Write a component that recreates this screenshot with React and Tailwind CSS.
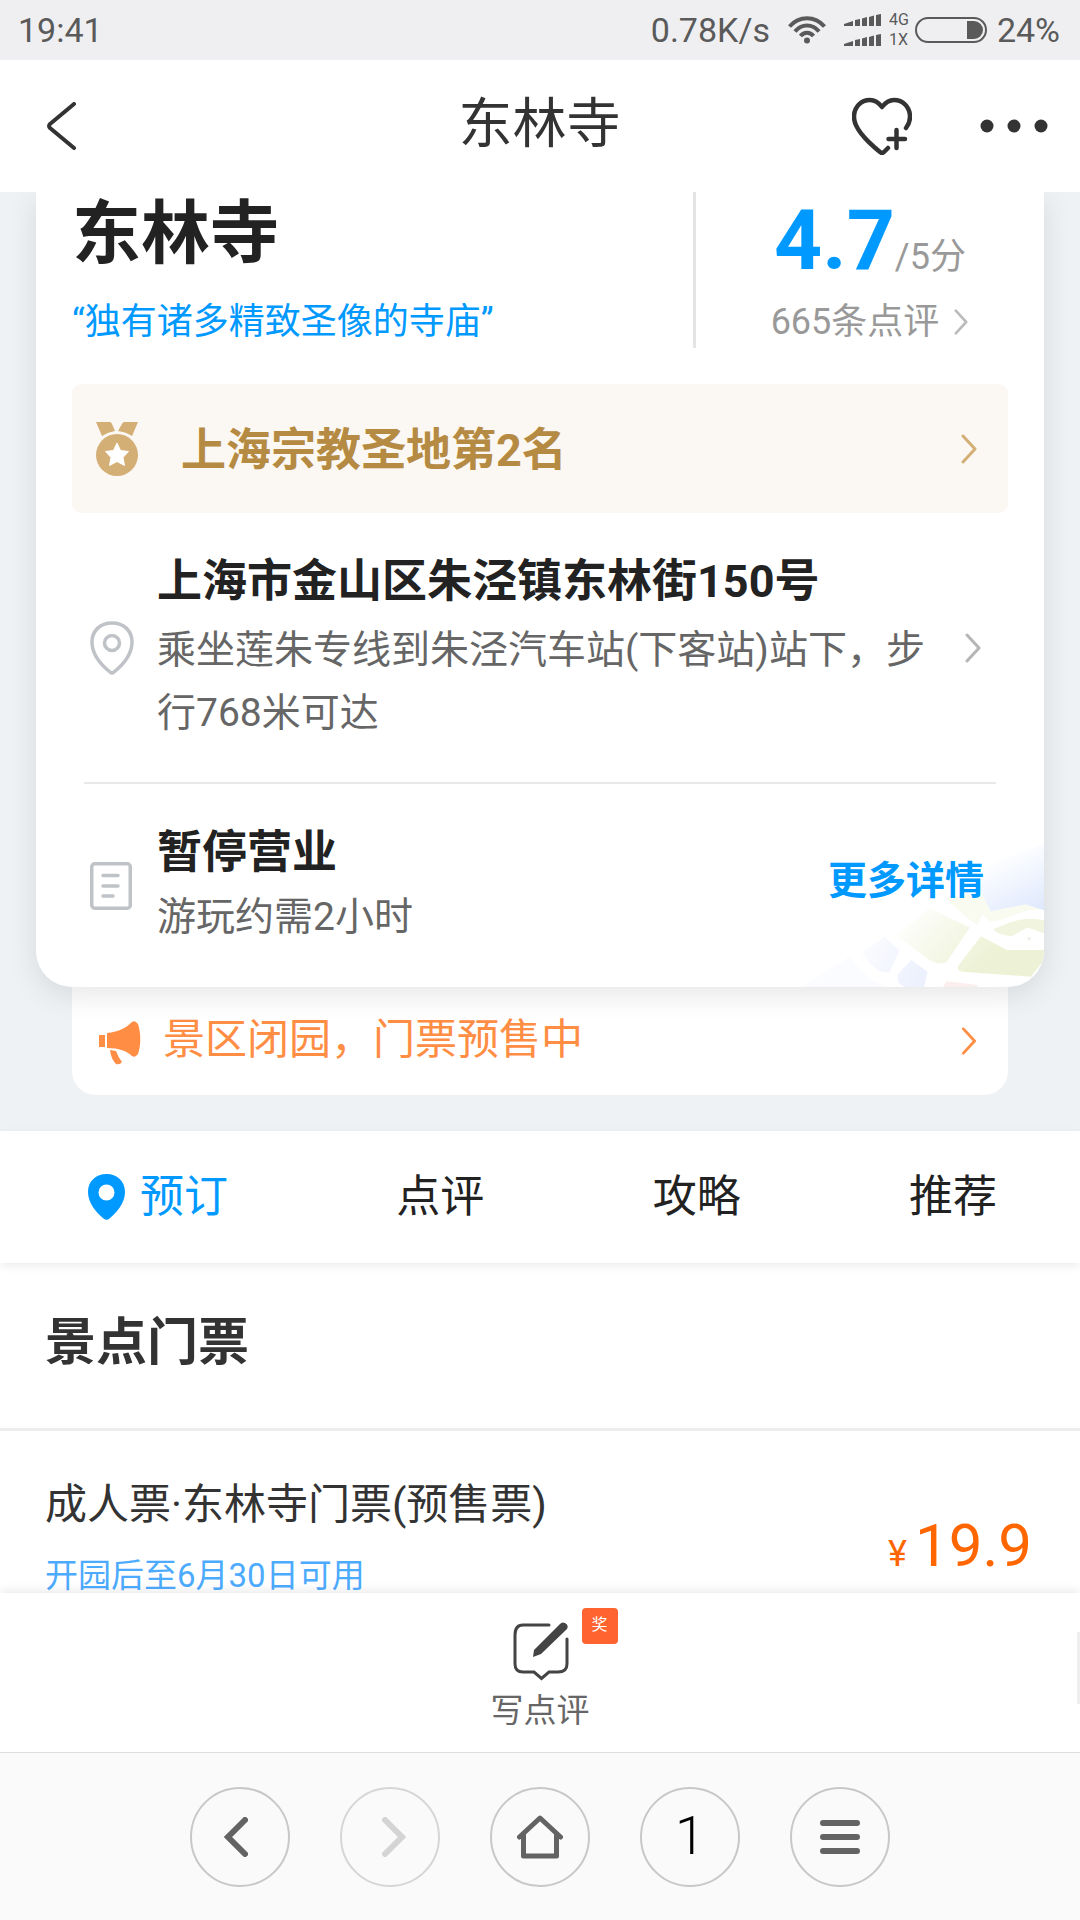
import React, { useState } from 'react'

// 右箭头
function ArrowRight({ className }) {
  return (
    <svg className={className} viewBox="0 0 16 30" fill="none" stroke="currentColor" strokeWidth="3" strokeLinecap="round" strokeLinejoin="round">
      <path d="M2 2 L14 15 L2 28" />
    </svg>
  )
}

// 双卡信号
function SignalBars() {
  return (
    <svg className="w-[37px] h-3" viewBox="0 0 37 12" fill="currentColor">
      <path d="M0 10 L9 7 V12 H0 Z M11 6 L16 5 V12 H11 Z M18 4.500 L23 3 V12 H18 Z M25 3 L30 1.500 V12 H25 Z M32 1 L37 0 V12 H32 Z" />
    </svg>
  )
}

// 状态栏
function StatusBar() {
  return (
    <div className="shrink-0 h-[60px] pl-[18px] pr-5 flex items-center bg-[#efeff1] text-[#5a5a5a] text-[34px]">
      <span>19:41</span>
      <span className="ml-auto">0.78K/s</span>
      <svg className="ml-[18px] w-[38px] h-7" viewBox="0 0 38 28" fill="none" stroke="currentColor" strokeWidth="4">
        <path d="M1.500 10.500 C11 -0.500 27 -0.500 36.500 10.500" />
        <path d="M7 15.500 C13.500 7.500 24.500 7.500 31 15.500" />
        <path d="M12.500 20 C16 15.500 22 15.500 25.500 20" />
        <circle cx="19" cy="24.500" r="3" fill="currentColor" stroke="none" />
      </svg>
      <div className="ml-[18px] flex flex-col gap-2">
        <SignalBars />
        <SignalBars />
      </div>
      <div className="ml-2 text-base leading-5">
        <div>4G</div>
        <div>1X</div>
      </div>
      <svg className="ml-1.5 w-[72px] h-[26px]" viewBox="0 0 72 26" fill="none">
        <rect x="1" y="1" width="70" height="24" rx="12" stroke="currentColor" strokeWidth="2" />
        <path d="M52 4 H59 A9 9 0 0 1 59 22 H52 Z" fill="currentColor" />
      </svg>
      <span className="ml-2.5">24%</span>
    </div>
  )
}

// 顶部导航
function Header() {
  return (
    <header className="shrink-0 h-[132px] pl-[47px] pr-8 grid grid-cols-3 items-center bg-white text-[#333]">
      <button aria-label="返回" className="w-8">
        <svg className="w-[30px] h-12" viewBox="0 0 30 48" fill="none" stroke="currentColor" strokeWidth="4" strokeLinecap="round" strokeLinejoin="round">
          <path d="M27 2 L3 22 Q1 24 3 26 L27 46" />
        </svg>
      </button>
      <h1 className="pb-0.5 pr-4 text-center whitespace-nowrap text-[54px] leading-[72px] font-normal">东林寺</h1>
      <div className="flex items-center justify-end gap-[68px]">
        <button aria-label="收藏">
          <svg className="w-[60px] h-[58px]" viewBox="0 0 60 58" fill="none" stroke="currentColor" strokeWidth="4.500" strokeLinecap="round" strokeLinejoin="round">
            <path d="M54 31 C57 27 58 23 58 20 C58 10 51 3 42 3 C36 3 33 6 30 10 C27 6 24 3 18 3 C9 3 2 10 2 20 C2 32 17 46 28 55 Q30 57 32 55 L36 51" />
            <path d="M44.500 33 V51 M36.500 42 H53" />
          </svg>
        </button>
        <button aria-label="更多">
          <svg className="w-[68px] h-4" viewBox="0 0 68 16" fill="currentColor">
            <circle cx="7" cy="8" r="6.500" />
            <circle cx="34" cy="8" r="6.500" />
            <circle cx="61" cy="8" r="6.500" />
          </svg>
        </button>
      </div>
    </header>
  )
}

// 卡片右下角的地图底纹
function MapBackground() {
  return (
    <svg className="absolute right-0 bottom-0 w-[249px] h-[146px]" viewBox="740 840 723 380" preserveAspectRatio="none">
      <defs>
        <linearGradient id="sea" gradientUnits="userSpaceOnUse" x1="1330" y1="880" x2="1400" y2="1040">
          <stop offset="0" stopColor="#dfe9fd" stopOpacity="0" />
          <stop offset="1" stopColor="#dfe9fd" />
        </linearGradient>
        <linearGradient id="land" gradientUnits="userSpaceOnUse" x1="1060" y1="1020" x2="1230" y2="1200">
          <stop offset="0" stopColor="#edf2d6" stopOpacity="0" />
          <stop offset="1" stopColor="#edf2d6" />
        </linearGradient>
        <linearGradient id="block" gradientUnits="userSpaceOnUse" x1="930" y1="1110" x2="1090" y2="1210">
          <stop offset="0" stopColor="#edf1fd" stopOpacity="0.2" />
          <stop offset="1" stopColor="#edf1fd" />
        </linearGradient>
      </defs>
      <path d="M1250 920 L1463 845 V1020 L1410 1005 L1308 1023 Z" fill="url(#sea)" />
      <path d="M1180 990 L1280 975 L1308 1023 L1410 1005 L1463 1020 C1400 1012 1350 1050 1305 1050 L1285 1030 L1270 1060 Q1230 1035 1180 990 Z" fill="#f5f8e8" opacity="0.6" />
      <path d="M1035 1085 L1130 1015 L1248 1065 L1180 1155 Q1160 1165 1130 1150 Z" fill="url(#land)" />
      <path d="M1315 1070 C1350 1060 1380 1035 1463 1046 V1080 L1415 1065 L1370 1088 Q1330 1085 1315 1070 Z" fill="#f1f5df" />
      <path d="M1280 1088 L1355 1124 H1463 V1150 L1425 1193 L1225 1180 Q1208 1176 1214 1165 Z" fill="url(#land)" />
      <path d="M935 1130 L1000 1090 L1044 1125 L1015 1180 Q975 1190 935 1130 Z" fill="url(#block)" />
      <path d="M1078 1150 L1125 1180 L1115 1220 H1060 Q1030 1210 1040 1185 Z" fill="url(#block)" />
      <path d="M760 1220 L900 1140 Q940 1200 1010 1220 Z" fill="#fafcff" />
      <path d="M1180 1205 L1270 1215 V1220 H1170 Z M1425 1196 L1440 1185 L1430 1205 Z" fill="#fbeeee" />
      <circle cx="1420" cy="1094" r="5" fill="#eef2ea" />
    </svg>
  )
}

// 景点信息卡片
function SpotCard() {
  return (
    <section className="relative z-10 mx-9 bg-white rounded-b-[36px] shadow-[0_8px_30px_rgba(0,0,0,0.1)]">
      <div className="absolute inset-0 overflow-hidden rounded-b-[36px]">
        <MapBackground />
      </div>
      <div className="relative">
        <div className="flex h-[156px]">
          <div className="flex-1 pl-9">
            <h2 className="text-[69px] leading-[86px] font-bold text-[#222]">东林寺</h2>
            <p className="mt-5 text-4xl leading-12 text-[#0099ff]">“独有诸多精致圣像的寺庙”</p>
          </div>
          <div className="w-[351px] border-l-3 border-[#e4e4e4] flex flex-col items-center">
            <div className="h-[86px] flex items-baseline text-4xl text-[#999]">
              <span className="text-[84px] leading-[98px] font-bold text-[#0099ff]">4.7</span>
              <span>/5分</span>
            </div>
            <a href="#reviews" className="mt-5 flex items-center gap-3.5 text-4xl leading-12 text-[#999]">
              665条点评
              <ArrowRight className="w-4 h-[26px] text-[#bbb]" />
            </a>
          </div>
        </div>

        {/* 榜单 */}
        <a href="#rank" className="mx-9 mt-9 h-[129px] pl-6 pr-[31px] flex items-center rounded-[9px] bg-[#fbf7f2] text-[#b58a42]">
          <svg className="w-[42px] h-[54px] text-[#d3af76]" viewBox="0 0 42 54" fill="currentColor">
            <path d="M0 0 H14 Q15 0 16 2 L19 9 Q12 10 6 14 Z" />
            <path d="M42 0 H28 Q27 0 26 2 L22 9 Q30 10 36 14 Z" />
            <circle cx="21" cy="33" r="21" />
            <path d="M21 21 L24.500 28.500 L32.500 29.500 L27 35.500 L28.500 43.500 L21 39.500 L13.500 43.500 L15 35.500 L9.500 29.500 L17.500 28.500 Z" fill="#fff" stroke="#fff" strokeLinejoin="round" />
          </svg>
          <span className="ml-[43px] pt-1 text-[45px] font-bold">上海宗教圣地第2名</span>
          <ArrowRight className="ml-auto w-4 h-[30px] text-[#d3af76]" />
        </a>

        {/* 地址 */}
        <a href="#map" className="mx-12 pt-9 h-[271px] flex border-b-2 border-[#e8e8e8]">
          <svg className="mt-[72px] ml-1.5 w-11 h-[54px] text-[#bfc3c7]" viewBox="0 0 44 54" fill="none" stroke="currentColor" strokeWidth="3.500" strokeLinejoin="round">
            <path d="M22 2 C10 2 2 10 2 21 C2 32 10 43 20 51 Q22 53 24 51 C34 43 42 32 42 21 C42 10 34 2 22 2 Z" />
            <circle cx="22" cy="22" r="7.500" />
          </svg>
          <div className="ml-[23px] pt-0.5 flex-1">
            <div className="text-[45px] leading-[62px] font-bold text-[#222]">上海市金山区朱泾镇东林街150号</div>
            <div className="mt-1.5 mr-8 text-[39px] leading-[63px] text-[#666]">乘坐莲朱专线到朱泾汽车站(下客站)站下，步行768米可达</div>
          </div>
          <ArrowRight className="mt-[84px] mr-3.5 w-[18px] h-[30px] text-[#b5b5b5]" />
        </a>

        {/* 营业状态 */}
        <div className="mx-12 h-[203px] flex items-center">
          <svg className="ml-1.5 w-[42px] h-12 text-[#bfc3c7]" viewBox="0 0 42 48" fill="none" stroke="currentColor" strokeWidth="3.500" strokeLinecap="round">
            <rect x="1.750" y="1.750" width="38.500" height="44.500" rx="3" />
            <path d="M13 13.500 H28 M13 24 H28 M13 34 H23" />
          </svg>
          <div className="ml-[25px]">
            <div className="text-[45px] leading-[62px] font-bold text-[#222]">暂停营业</div>
            <div className="mt-0.5 text-[39px] leading-[63px] text-[#666]">游玩约需2小时</div>
          </div>
          <a href="#detail" className="ml-auto mr-3 pb-2 text-[39px] font-bold text-[#0099ff]">更多详情</a>
        </div>
      </div>
    </section>
  )
}

// 闭园提示
function Notice() {
  return (
    <a href="#notice" className="mx-[72px] h-[108px] pl-[27px] pr-[31px] flex items-center rounded-b-3xl bg-white text-[#ff8d43]">
      <svg className="mt-[3px] w-[42px] h-11" viewBox="0 0 42 44" fill="currentColor">
        <path d="M0 14 H6 V26 H0 Z" />
        <path d="M8 12 C20 11 28 6 33 1 Q36 -1 39 3 C42 12 42 24 39 33 Q36 37 33 35 C28 30 20 27 8 27 Z" />
        <path d="M11 29 L17 30 Q19 36 23 41 Q21 44 17 43 Q12 38 11 29 Z" />
      </svg>
      <span className="ml-[22px] pb-1 text-[42px]">景区闭园，门票预售中</span>
      <ArrowRight className="ml-auto w-4 h-7" />
    </a>
  )
}

// 底部浏览器按钮
function RoundButton({ label, disabled, children }) {
  return (
    <button
      aria-label={label}
      disabled={disabled}
      className="w-[100px] h-[100px] flex items-center justify-center rounded-full border-2 border-[#c8c8c8] text-[#636363] disabled:border-[#d6d6d6] disabled:text-[#d4d4d4]"
    >
      {children}
    </button>
  )
}

function App() {
  const [activeTab, setActiveTab] = useState('预订')

  const tabs = ['预订', '点评', '攻略', '推荐']

  return (
    <div className="h-screen flex flex-col overflow-hidden bg-white font-[Roboto,'Noto_Sans_CJK_SC',sans-serif]">
      <StatusBar />
      <Header />

      <main className="flex-1 min-h-0 overflow-hidden">
        <div className="pb-9 bg-[#eef2f5]">
          <SpotCard />
          <Notice />
        </div>

        {/* 标签页 */}
        <nav className="relative z-10 h-[132px] pl-[88px] pr-[83px] flex items-center justify-between bg-white shadow-[0_3px_9px_rgba(0,0,0,0.08)]">
          {tabs.map(tab => (
            <button
              key={tab}
              onClick={() => setActiveTab(tab)}
              className={`flex items-center gap-[15px] text-[44px] ${activeTab === tab ? 'text-[#0099ff]' : 'text-[#222]'}`}
            >
              {activeTab === tab && (
                <svg className="w-[37px] h-[46px]" viewBox="0 0 37 46" fill="currentColor" fillRule="evenodd">
                  <path d="M18.500 0 C8 0 0 7 0 18 C0 29 8 38 15.500 44.500 Q18.500 47 21.500 44.500 C29 38 37 29 37 18 C37 7 29 0 18.500 0 Z M18.500 10.500 A8 8 0 1 1 18.500 26.500 A8 8 0 1 1 18.500 10.500 Z" />
                </svg>
              )}
              {tab}
            </button>
          ))}
        </nav>

        {/* 门票 */}
        <section className="bg-white">
          <h2 className="h-[168px] pl-[45px] pb-1 flex items-center border-b-3 border-[#ededed] text-[51px] font-bold text-[#333]">景点门票</h2>
          <div className="pl-[45px] pr-12 pt-[43px] flex justify-between">
            <div>
              <div className="text-[42px] leading-[62px] text-[#333]">成人票·东林寺门票(预售票)</div>
              <div className="mt-6 text-[33px] leading-8 text-[#4dabff]">开园后至6月30日可用</div>
            </div>
            <div className="pt-9 flex items-baseline gap-2 text-[#ff6600]">
              <span className="text-4xl">¥</span>
              <span className="text-[60px] leading-[72px]">19.9</span>
            </div>
          </div>
        </section>
      </main>

      {/* 写点评 */}
      <div className="relative z-10 shrink-0 h-[159px] flex justify-center bg-white shadow-[0_-3px_9px_rgba(0,0,0,0.08)]">
        <button className="relative pt-7 flex flex-col items-center text-[33px] leading-12 text-[#666]">
          <svg className="w-[58px] h-[60px]" viewBox="0 0 58 60" fill="none" stroke="#444" strokeWidth="3" strokeLinecap="round">
            <path d="M38 4 H12 Q4 4 4 14 V43 Q4 51 12 51 H23 L30.500 57.500 L38 51 H47 Q56 51 56 43 V18" />
            <path d="M49 3 Q51 0.500 54 2 Q58 4 56 8 L30 33 L22 36 L23 29 Z" fill="#444" stroke="none" />
          </svg>
          <span className="mt-1.5">写点评</span>
          <span className="absolute top-[15px] -right-7 w-9 h-9 rounded bg-[#ff6430] text-white text-base leading-[34px] text-center">奖</span>
        </button>
        <div className="absolute right-0 top-[39px] w-[3px] h-[72px] bg-[#eee]" />
      </div>

      {/* 浏览器工具栏 */}
      <footer className="relative z-10 shrink-0 h-[168px] flex items-center justify-center gap-[50px] border-t border-[#ddd] bg-[#fafafa]">
        <RoundButton label="后退">
          <svg className="mr-2 w-6 h-10" viewBox="0 0 24 40" fill="none" stroke="currentColor" strokeWidth="6" strokeLinecap="round">
            <path d="M21 3 L4 20 L21 37" />
          </svg>
        </RoundButton>
        <RoundButton label="前进" disabled>
          <svg className="ml-2 w-6 h-10" viewBox="0 0 24 40" fill="none" stroke="currentColor" strokeWidth="6" strokeLinecap="round">
            <path d="M3 3 L20 20 L3 37" />
          </svg>
        </RoundButton>
        <RoundButton label="主页">
          <svg className="w-[46px] h-11" viewBox="0 0 46 44" fill="none" stroke="currentColor" strokeWidth="5" strokeLinecap="round" strokeLinejoin="round">
            <path d="M2.500 22 L23 3 L43.500 22" />
            <path d="M6.500 20 V41 H39.500 V20" />
          </svg>
        </RoundButton>
        <RoundButton label="窗口">
          <span className="pb-0.5 text-[54px] leading-none font-light text-black">1</span>
        </RoundButton>
        <RoundButton label="菜单">
          <svg className="w-10 h-[34px]" viewBox="0 0 40 34" stroke="currentColor" strokeWidth="6" strokeLinecap="round">
            <path d="M3 3 H37 M3 17 H37 M3 31 H37" />
          </svg>
        </RoundButton>
      </footer>
    </div>
  )
}

export default App
